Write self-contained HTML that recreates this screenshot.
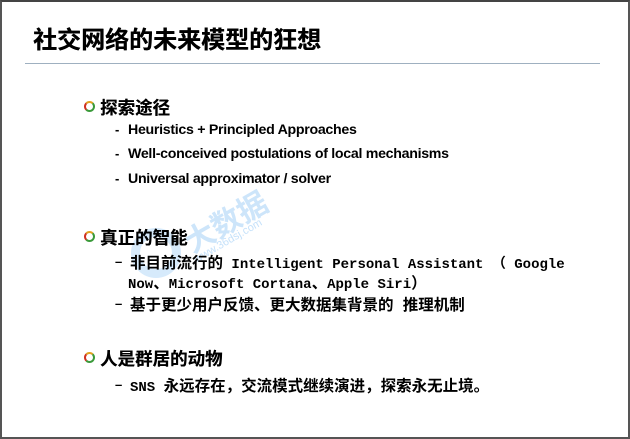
<!DOCTYPE html>
<html><head><meta charset="utf-8"><style>
body{margin:0;width:630px;height:439px;background:#fff;position:relative;overflow:hidden;font-family:"Liberation Sans","Noto Sans CJK SC",sans-serif;}
.frame{position:absolute;left:0;top:0;width:626px;height:435px;border:2px solid #555;border-top-color:#444;}
.a{position:absolute;white-space:nowrap;color:#000;}
.t{left:33px;top:20px;font-size:24px;font-weight:bold;text-shadow:0.4px 0 0 #000;}
.hr{position:absolute;left:25px;top:63px;width:575px;height:1px;background:#9fb0c0;}
.h{font-size:17.5px;font-weight:bold;left:100px;text-shadow:0.3px 0 0 #000;}
.s{font-size:14.2px;font-weight:bold;left:128px;letter-spacing:-0.3px}
.d{font-size:13px;font-weight:bold;left:115px;}
.m{font-family:"Liberation Mono","Noto Sans CJK SC",monospace;font-size:14px;font-weight:bold;left:130px;}
.c{font-size:15.5px;}
.ic{position:absolute;width:7px;height:7px;border-radius:50%;border:2px solid #3a9a3a;border-top-color:#e0a020;border-left-color:#d03020;box-sizing:content-box;}
.wm{position:absolute;left:131px;top:228px;width:50px;height:50px;border-radius:50%;border:9px solid rgba(90,170,240,0.25);box-sizing:border-box;}
.wt{position:absolute;left:180px;top:198px;font-size:30px;font-weight:bold;color:rgba(90,170,240,0.3);transform:rotate(-30deg);}
.ws{position:absolute;left:190px;top:235px;font-size:11px;color:rgba(90,170,240,0.35);transform:rotate(-30deg);}
</style></head><body>
<div class="frame"></div>
<div class="a t">社交网络的未来模型的狂想</div>
<div class="hr"></div>
<div class="ic" style="left:84px;top:101px"></div>
<div class="a h" style="top:95px">探索途径</div>
<div class="a d" style="top:122px">-</div><div class="a s" style="top:122px">Heuristics + Principled Approaches</div>
<div class="a d" style="top:146px">-</div><div class="a s" style="top:146px">Well-conceived postulations of local mechanisms</div>
<div class="a d" style="top:171px">-</div><div class="a s" style="top:171px">Universal approximator / solver</div>
<div class="wm"></div><div class="wt">大数据</div><div class="ws">www.36dsj.com</div>
<div class="ic" style="left:84px;top:231px"></div>
<div class="a h" style="top:225px">真正的智能</div>
<div class="a d" style="top:254px">–</div><div class="a m" style="top:251px"><span class="c">非目前流行的</span> Intelligent Personal Assistant （ Google</div>
<div class="a m" style="top:271px;left:128px">Now<span class="c">、</span>Microsoft Cortana<span class="c">、</span>Apple Siri<span class="c">）</span></div>
<div class="a d" style="top:296px">–</div><div class="a m" style="top:293px"><span class="c">基于更少用户反馈、更大数据集背景的 推理机制</span></div>
<div class="ic" style="left:84px;top:352px"></div>
<div class="a h" style="top:346px">人是群居的动物</div>
<div class="a d" style="top:377px">–</div><div class="a m" style="top:374px">SNS <span class="c">永远存在，交流模式继续演进，探索永无止境。</span></div>
</body></html>
